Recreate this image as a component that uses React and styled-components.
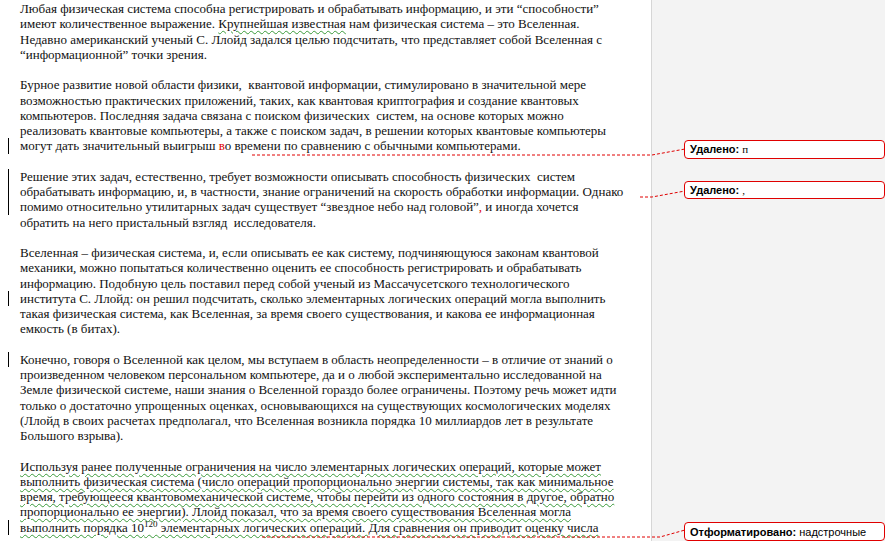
import styled, { createGlobalStyle } from 'styled-components';

const Global = createGlobalStyle`
  html, body { margin: 0; padding: 0; background: #fff; }
  body { overflow: hidden; }
`;

const Screen = styled.div`
  position: relative;
  width: 885px;
  height: 541px;
  overflow: hidden;
  display: flex;
`;

const Page = styled.div`
  width: 652px;
  padding: 1px 0 0 20px;
  box-sizing: border-box;
  background: #fff;
  font-family: "Liberation Serif", "Times New Roman", serif;
  font-size: 13px;
  color: #111;
`;

const Margin = styled.div`
  flex: 1;
  background: #f3f3f3;
  border-left: 1px solid #d6d6d6;
  display: flex;
  flex-direction: column;
  padding: 140px 0 0 32px;
  gap: 22px;
`;

const Para = styled.div`
  margin-bottom: 15.25px;
  ${p => p.$squiggle && `
    text-decoration: underline wavy #3a9a3a;
    text-decoration-thickness: 1px;
    text-underline-offset: 2px;
  `}
`;

const Line = styled.div`
  position: relative;
  height: 15.25px;
  line-height: 15.25px;
  white-space: pre;
  &::before {
    content: '';
    display: ${p => (p.$changed ? 'block' : 'none')};
    position: absolute;
    left: -12px;
    top: 0;
    bottom: 0;
    border-left: 1px solid #000;
  }
`;

const Squiggle = styled.span`
  text-decoration: underline wavy #3a9a3a;
  text-decoration-thickness: 1px;
  text-underline-offset: 2px;
`;

const Mark = styled.span`
  color: #e00000;
`;

const Balloon = styled.div`
  width: 194px;
  height: 17px;
  border: 1px solid #e00000;
  border-radius: 4px;
  background: #fff;
  display: flex;
  align-items: center;
  padding-left: 5px;
  box-sizing: content-box;
  font-family: "Liberation Serif", serif;
  font-size: 11px;
  white-space: nowrap;
  overflow: hidden;
  &:nth-child(3) { margin-top: 301px; }
`;

const BalloonLabel = styled.b`
  font-family: "Liberation Sans", Arial, sans-serif;
  font-size: 11px;
  margin-right: 3px;
`;

const BalloonText = styled.span`
  font-family: ${p => (p.$sans ? '"Liberation Sans", Arial, sans-serif' : '"Liberation Serif", serif')};
`;

const Connectors = styled.svg`
  position: absolute;
  left: 0;
  top: 0;
  pointer-events: none;
`;

const paras = [
  { lines: [
    'Любая физическая система способна регистрировать и обрабатывать информацию, и эти “способности”',
    <>имеют количественное выражение. <Squiggle>Крупнейшая известная</Squiggle> нам физическая система – это Вселенная.</>,
    'Недавно американский ученый С. Ллойд задался целью подсчитать, что представляет собой Вселенная с',
    '“информационной” точки зрения.',
  ] },
  { lines: [
    'Бурное развитие новой области физики,  квантовой информации, стимулировано в значительной мере',
    'возможностью практических приложений, таких, как квантовая криптография и создание квантовых',
    'компьютеров. Последняя задача связана с поиском физических  систем, на основе которых можно',
    'реализовать квантовые компьютеры, а также с поиском задач, в решении которых квантовые компьютеры',
    <>могут дать значительный выигрыш <Mark>в</Mark>о времени по сравнению с обычными компьютерами.</>,
  ], changed: [4] },
  { lines: [
    'Решение этих задач, естественно, требует возможности описывать способность физических  систем',
    'обрабатывать информацию, и, в частности, знание ограничений на скорость обработки информации. Однако',
    <>помимо относительно утилитарных задач существует “звездное небо над головой”<Mark>,</Mark> и иногда хочется</>,
    'обратить на него пристальный взгляд  исследователя.',
  ], changed: [0, 1, 2] },
  { lines: [
    'Вселенная – физическая система, и, если описывать ее как систему, подчиняющуюся законам квантовой',
    'механики, можно попытаться количественно оценить ее способность регистрировать и обрабатывать',
    'информацию. Подобную цель поставил перед собой ученый из Массачусетского технологического',
    'института С. Ллойд: он решил подсчитать, сколько элементарных логических операций могла выполнить',
    'такая физическая система, как Вселенная, за время своего существования, и какова ее информационная',
    'емкость (в битах).',
  ], changed: [3] },
  { lines: [
    'Конечно, говоря о Вселенной как целом, мы вступаем в область неопределенности – в отличие от знаний о',
    'произведенном человеком персональном компьютере, да и о любой экспериментально исследованной на',
    'Земле физической системе, наши знания о Вселенной гораздо более ограничены. Поэтому речь может идти',
    'только о достаточно упрощенных оценках, основывающихся на существующих космологических моделях',
    '(Ллойд в своих расчетах предполагал, что Вселенная возникла порядка 10 миллиардов лет в результате',
    'Большого взрыва).',
  ], changed: [0] },
  { squiggle: true, lines: [
    'Используя ранее полученные ограничения на число элементарных логических операций, которые может',
    'выполнить физическая система (число операций пропорционально энергии системы, так как минимальное',
    'время, требующееся квантовомеханической системе, чтобы перейти из одного состояния в другое, обратно',
    'пропорционально ее энергии). Ллойд показал, что за время своего существования Вселенная могла',
    <>выполнить порядка 10<sup style={{ fontSize: 9, lineHeight: 0 }}>120</sup> элементарных логических операций. Для сравнения он приводит оценку числа</>,
  ], changed: [4] },
];

export default function App() {
  return (
    <Screen>
      <Global />
      <Page>
        {paras.map((p, i) => (
          <Para key={i} $squiggle={p.squiggle}>
            {p.lines.map((l, j) => (
              <Line key={j} $changed={p.changed && p.changed.includes(j)}>{l}</Line>
            ))}
          </Para>
        ))}
      </Page>
      <Margin>
        <Balloon><BalloonLabel>Удалено:</BalloonLabel><BalloonText>п</BalloonText></Balloon>
        <Balloon><BalloonLabel>Удалено:</BalloonLabel><BalloonText>,</BalloonText></Balloon>
        <Balloon><BalloonLabel>Отформатировано:</BalloonLabel><BalloonText $sans>надстрочные</BalloonText></Balloon>
      </Margin>
      <Connectors width="885" height="541">
        <g fill="none" stroke="#e00000" strokeWidth="1" strokeDasharray="3 2">
          <polyline points="252,155 652,155 685,149" />
          <polyline points="640,197 652,197 685,191" />
          <polyline points="262,537 660,537 685,530" />
        </g>
      </Connectors>
    </Screen>
  );
}
